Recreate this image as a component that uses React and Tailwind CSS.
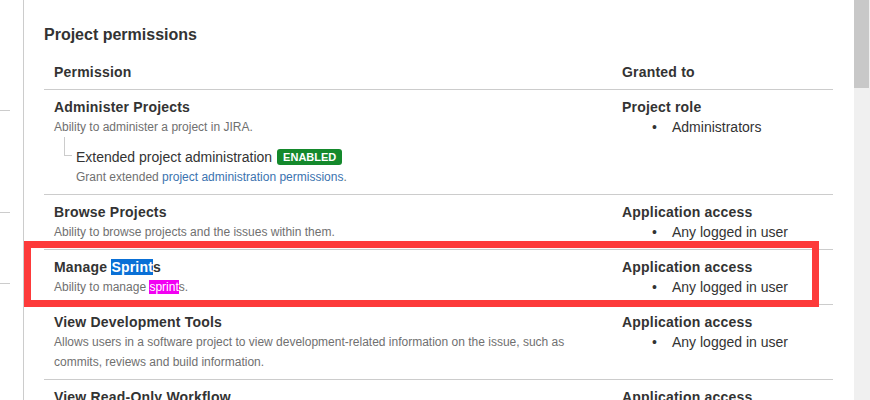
import React from "react";

const rows = [
  {
    title: "Administer Projects",
    desc: "Ability to administer a project in JIRA.",
    extended: true,
    grantTitle: "Project role",
    grantItems: ["Administrators"],
  },
  {
    title: "Browse Projects",
    desc: "Ability to browse projects and the issues within them.",
    grantTitle: "Application access",
    grantItems: ["Any logged in user"],
  },
  {
    title: "Manage Sprints",
    desc: "Ability to manage sprints.",
    highlight: true,
    grantTitle: "Application access",
    grantItems: ["Any logged in user"],
  },
  {
    title: "View Development Tools",
    desc: "Allows users in a software project to view development-related information on the issue, such as commits, reviews and build information.",
    grantTitle: "Application access",
    grantItems: ["Any logged in user"],
  },
  {
    title: "View Read-Only Workflow",
    desc: "Users with this permission may view a read-only version of a workflow.",
    grantTitle: "Application access",
    grantItems: ["Any logged in user"],
  },
];

function PermissionTitle({ row }) {
  if (row.highlight) {
    return (
      <div className="font-bold text-[14px] leading-[20px] tracking-[0.2px] text-[#333]">
        Manage <span className="bg-[#0a70d6] text-white">Sprint</span>s
      </div>
    );
  }
  return <div className="font-bold text-[14px] leading-[20px] tracking-[0.2px] text-[#333]">{row.title}</div>;
}

function PermissionDesc({ row }) {
  if (row.highlight) {
    return (
      <div className="text-[12px] leading-[20px] text-[#707070]">
        Ability to manage <span className="bg-[#f200f2] text-white">sprint</span>s.
      </div>
    );
  }
  return <div className="text-[12px] leading-[20px] text-[#707070]">{row.desc}</div>;
}

export default function App() {
  return (
    <div className="relative flex h-[400px] w-[870px] overflow-hidden bg-white font-['Liberation_Sans',Arial,sans-serif] text-[#333]">
      {/* sidebar edge */}
      <div className="w-[24px] shrink-0 border-r border-[#ccc]">
        <div className="mt-[110px] h-px w-[10px] bg-[#ccc]" />
        <div className="mt-[101px] h-px w-[10px] bg-[#ccc]" />
        <div className="mt-[70px] h-px w-[10px] bg-[#ccc]" />
      </div>

      {/* main */}
      <div className="flex-1 pl-[20px] pr-[21px] pt-[23px]">
        <h2 className="text-[16px] font-bold leading-[24px] text-[#333]">Project permissions</h2>
        <div className="mt-[8px] w-[789px]">
          <div className="flex border-b border-[#ccc] pb-[7px] pt-[7px] text-[14px] font-bold leading-[20px] tracking-[0.2px]">
            <div className="w-[568px] px-[10px]">Permission</div>
            <div className="flex-1 px-[10px]">Granted to</div>
          </div>
          {rows.map((row) => (
            <div key={row.title} className="flex border-b border-[#ccc] py-[7px]">
              <div className="w-[568px] px-[10px]">
                <PermissionTitle row={row} />
                <PermissionDesc row={row} />
                {row.extended && (
                  <div className="relative mt-[10px] pl-[22px]">
                    <div className="absolute left-[10px] top-[-10px] h-[19px] w-[8px] border-b border-l border-[#ccc]" />
                    <div className="flex items-center text-[14px] leading-[20px] text-[#333]">
                      Extended project administration
                      <span className="ml-[5px] rounded-[3px] bg-[#14892c] px-[6px] text-[11px] font-bold leading-[16px] text-white">
                        ENABLED
                      </span>
                    </div>
                    <div className="text-[12px] leading-[20px] text-[#707070]">
                      Grant extended <span className="text-[#3b73af]">project administration permissions</span>.
                    </div>
                  </div>
                )}
              </div>
              <div className="flex-1 px-[10px]">
                <div className="text-[14px] font-bold leading-[20px] tracking-[0.2px] text-[#333]">{row.grantTitle}</div>
                {row.grantItems.map((item) => (
                  <div key={item} className="flex pl-[30px] text-[14px] leading-[20px] text-[#333]">
                    <span className="w-[20px]">•</span>
                    <span>{item}</span>
                  </div>
                ))}
              </div>
            </div>
          ))}
        </div>
      </div>

      {/* scrollbar */}
      <div className="w-[16px] shrink-0 bg-[#f0f0f0]">
        <div className="h-[88px] w-[15px] bg-[#c8c8c8]" />
      </div>

      {/* red annotation box */}
      <div className="pointer-events-none absolute left-[24px] top-[241px] h-[66px] w-[795px] border-[7px] border-[#fd3a3a]" />
    </div>
  );
}
